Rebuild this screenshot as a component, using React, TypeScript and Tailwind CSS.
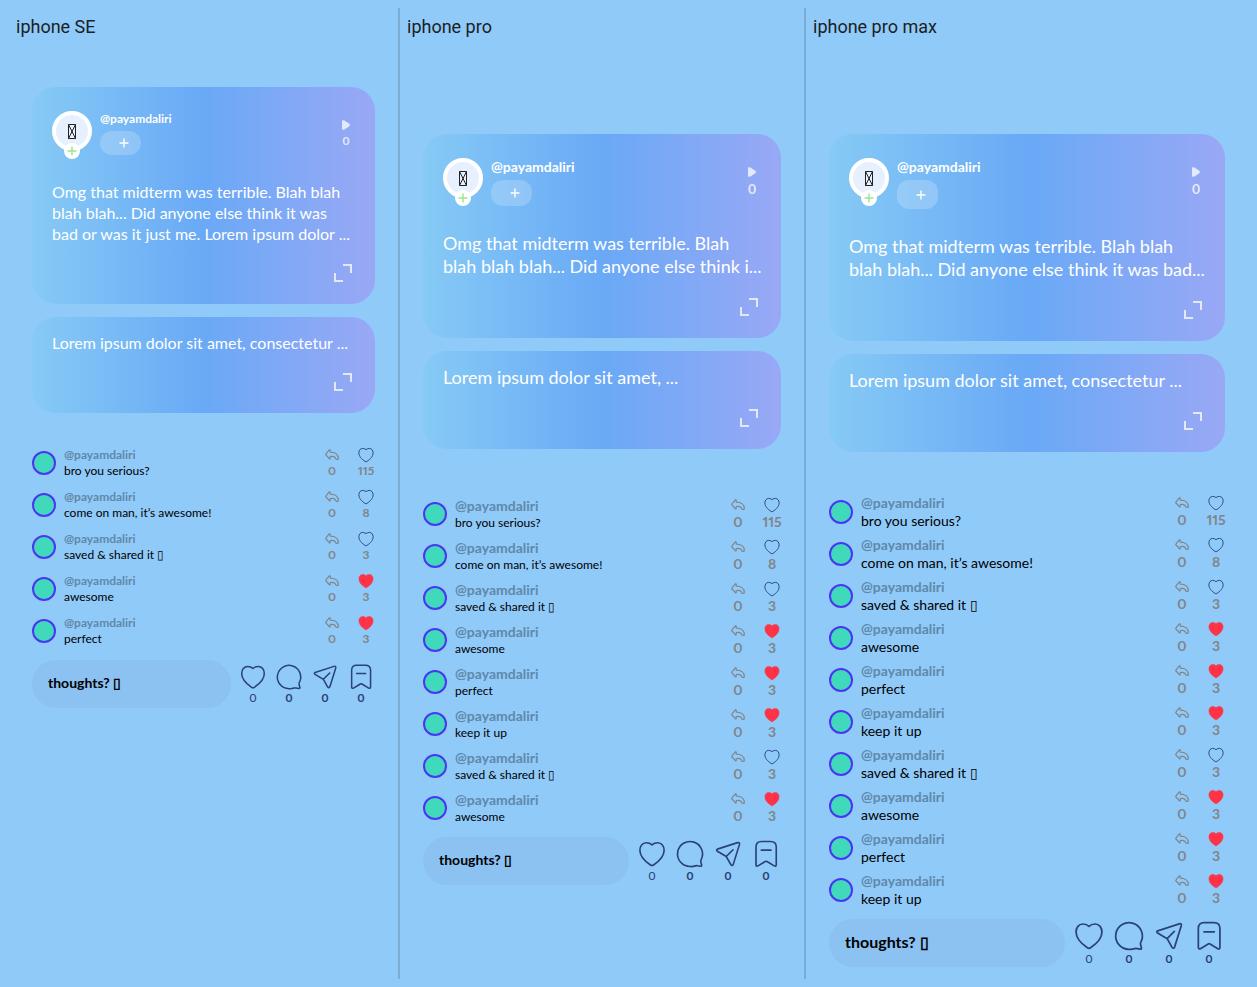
import React from "react";

type IconProps = { className?: string };

const HEART =
  "M12 4.7C10.8 3.5 8.9 3 7.4 3 4.3 3 2.3 5.8 2.3 9c0 5 4 8.800 8.500 11.800q1.200.8 2.400 0C17.700 17.800 21.700 14 21.700 9c0-3.200-2-6-5.100-6-1.500 0-3.400.5-4.600 1.700Z";

function Heart({ className, filled = false }: IconProps & { filled?: boolean }) {
  return (
    <svg viewBox="0 0 24 24" className={className} fill={filled ? "currentColor" : "none"} stroke="currentColor" strokeWidth={filled ? 0.6 : 1.3} strokeLinejoin="round" aria-hidden="true">
      <path d={HEART} />
    </svg>
  );
}

function Bubble({ className }: IconProps) {
  return (
    <svg viewBox="0 0 24 24" className={className} fill="none" stroke="currentColor" strokeWidth="1.3" strokeLinejoin="round" aria-hidden="true">
      <path d="M12 22a10 10 0 1 1 8.900-5.400c-.4.8-.4 1.300-.2 2l.6 2.200c.2.7-.2 1.100-.9 1l-2.300-.4c-.7-.1-1.200-.1-1.800.1A10 10 0 0 1 12 22Z" />
    </svg>
  );
}

function Send({ className }: IconProps) {
  return (
    <svg viewBox="0 0 24 24" className={className} fill="none" stroke="currentColor" strokeWidth="1.3" strokeLinecap="round" strokeLinejoin="round" aria-hidden="true">
      <path d="M3.500 8.100 19.700 2.900Q21.600 2.400 21.200 4.300L16.200 20.300Q15.400 22 14.200 20.400L10.600 14 3.500 9.800Q2.200 8.800 3.500 8.100ZM10.600 14 16 8.600" />
    </svg>
  );
}

function Bookmark({ className }: IconProps) {
  return (
    <svg viewBox="0 0 24 24" className={className} fill="none" stroke="currentColor" strokeWidth="1.3" strokeLinecap="round" strokeLinejoin="round" aria-hidden="true">
      <path d="M8.300 2h7.400q4.500 0 4.500 4.300v14.200q0 1.700-1.600 1L12.800 18q-.7-.4-1.400 0l-5.800 3.500q-1.600.7-1.600-1V6.300Q4 2 8.300 2ZM8.200 8.900h7.800" />
    </svg>
  );
}

function Reply({ className }: IconProps) {
  return (
    <svg viewBox="0 0 14 12" className={className} fill="none" stroke="currentColor" strokeWidth="1.200" strokeLinejoin="round" aria-hidden="true">
      <path d="M5.200 1.300V3.100C9.700 2.900 13.300 5.300 13.300 9.400q0 .9-1 .9h-.8q-.8 0-1-.9C10.100 7.600 8 7 5.200 7.500V9.200q0 1.100-.9.500L1 6q-.6-.6 0-1.200L4.300.9q.9-.6.9.4Z" />
    </svg>
  );
}

function Expand({ className }: IconProps) {
  return (
    <svg viewBox="0 0 24 24" className={className} fill="none" stroke="currentColor" strokeWidth="2" aria-hidden="true">
      <path d="M12 4h8v8M4 12v8h8" />
    </svg>
  );
}

function Play({ className }: IconProps) {
  return (
    <svg viewBox="0 0 8 10" className={className} fill="currentColor" aria-hidden="true">
      <path d="M0 1Q0 0 1.200.3L2.500.5 7.300 3.800Q8.600 5 7.300 6.200L2.500 9.500 1.200 9.700Q0 10 0 9Z" />
    </svg>
  );
}

function Plus({ className }: IconProps) {
  return (
    <svg viewBox="0 0 10 10" className={className} fill="none" stroke="currentColor" strokeWidth="1.400" strokeLinecap="round" aria-hidden="true">
      <path d="M5 1v8M1 5h8" />
    </svg>
  );
}

function MissingGlyph({ className }: IconProps) {
  return (
    <svg viewBox="0 0 8 15" className={className} fill="none" stroke="currentColor" strokeWidth="1" aria-hidden="true">
      <path d="M.5.5h7v14h-7ZM.5.5l7 14M7.500.5l-7 14" />
    </svg>
  );
}

type Comment = { text: string; likes: number; liked: boolean };

const comments: Comment[] = [
  { text: "bro you serious?", likes: 115, liked: false },
  { text: "come on man, it’s awesome!", likes: 8, liked: false },
  { text: "saved & shared it ▯", likes: 3, liked: false },
  { text: "awesome", likes: 3, liked: true },
  { text: "perfect", likes: 3, liked: true },
  { text: "keep it up", likes: 3, liked: true },
  { text: "saved & shared it ▯", likes: 3, liked: false },
  { text: "awesome", likes: 3, liked: true },
  { text: "perfect", likes: 3, liked: true },
  { text: "keep it up", likes: 3, liked: true },
];

type Device = {
  id: string;
  title: string;
  post: string[];
  quote: string;
  count: number;
  top: string;
  listGap: string;
  handle: string;
  pill: string;
  body: string;
  comment: string;
  input: string;
  action: string;
};

const devices: Device[] = [
  {
    id: "se",
    title: "iphone SE",
    post: ["Omg that midterm was terrible. Blah blah", "blah blah... Did anyone else think it was", "bad or was it just me. Lorem ipsum dolor ..."],
    quote: "Lorem ipsum dolor sit amet, consectetur ...",
    count: 5,
    top: "pt-12",
    listGap: "mt-[29px]",
    handle: "text-[12px] leading-[16px]",
    pill: "h-[24px]",
    body: "text-[16px] leading-[21px]",
    comment: "text-[12px] leading-[16px]",
    input: "text-[14px]",
    action: "size-[28px]",
  },
  {
    id: "pro",
    title: "iphone pro",
    post: ["Omg that midterm was terrible. Blah", "blah blah blah... Did anyone else think i..."],
    quote: "Lorem ipsum dolor sit amet, ...",
    count: 8,
    top: "pt-[95px]",
    listGap: "mt-[44px]",
    handle: "text-[14px] leading-[18px]",
    pill: "h-[26px]",
    body: "text-[18px] leading-[23px]",
    comment: "text-[12px] leading-[16px]",
    input: "text-[14px]",
    action: "size-[30px]",
  },
  {
    id: "max",
    title: "iphone pro max",
    post: ["Omg that midterm was terrible. Blah blah", "blah blah... Did anyone else think it was bad..."],
    quote: "Lorem ipsum dolor sit amet, consectetur ...",
    count: 10,
    top: "pt-[95px]",
    listGap: "mt-[39px]",
    handle: "text-[14px] leading-[18px]",
    pill: "h-[29px]",
    body: "text-[18px] leading-[23px]",
    comment: "text-[14px] leading-[18px]",
    input: "text-[16px]",
    action: "size-[32px]",
  },
];

const cardClass = "flex flex-col rounded-3xl bg-linear-to-r/srgb from-[#86caf5] via-[#69a9f6] to-[#99a8f5] px-5 pb-[19px] text-white";

function ExpandButton() {
  return (
    <button type="button" aria-label="Expand" className="mt-[17px] self-end text-white/75">
      <Expand className="size-6" />
    </button>
  );
}

function Post({ device }: { device: Device }) {
  return (
    <article className={`${cardClass} pt-6`}>
      <header className="flex gap-2">
        <div className="relative size-10 shrink-0">
          <div className="grid size-10 place-items-center rounded-full border-4 border-white bg-[#e6f0ff] text-[#222]">
            <MissingGlyph className="h-[15px] w-[8px]" />
          </div>
          <span className="absolute top-8 left-3 grid size-4 place-items-center rounded-full bg-white text-[#9be58a]">
            <Plus className="size-[10px]" />
          </span>
        </div>
        <div className="flex flex-col items-start gap-1">
          <a href="#profile" className={`font-bold ${device.handle}`}>@payamdaliri</a>
          <button type="button" aria-label="Follow" className={`flex w-[41px] items-center justify-end rounded-xl bg-white/20 pr-3 ${device.pill}`}>
            <Plus className="size-[10px]" />
          </button>
        </div>
        <button type="button" aria-label="Plays" className={`mt-[9px] ml-auto mr-[5px] flex flex-col items-center gap-[3px] self-start font-bold text-white/75 ${device.handle}`}>
          <Play className="h-[10px] w-[8px]" />
          <span>0</span>
        </button>
      </header>
      <p className={`mt-[26px] whitespace-nowrap ${device.body}`}>
        {device.post.map((line) => (
          <span key={line} className="block">{line}</span>
        ))}
      </p>
      <ExpandButton />
    </article>
  );
}

function CommentRow({ comment, device }: { comment: Comment; device: Device }) {
  return (
    <li className="flex h-[42px] items-center gap-2">
      <span className="size-6 shrink-0 rounded-full border-2 border-[#4a35f5] bg-[#41d9bb]" />
      <div className="min-w-0 flex-1 pb-px">
        <p className={`font-bold text-[#5f88a9] ${device.handle}`}>@payamdaliri</p>
        <p className={`text-black ${device.comment}`}>{comment.text}</p>
      </div>
      <div className={`flex gap-4 font-bold text-[#808588] proportional-nums ${device.handle}`}>
        <button type="button" aria-label="Reply" className="flex w-[18px] flex-col items-center">
          <span className="flex h-4 items-center">
            <Reply className="h-[12px] w-[14px]" />
          </span>
          <span>0</span>
        </button>
        <button type="button" aria-label="Like comment" className="flex w-[18px] flex-col items-center">
          <Heart className={`h-4 w-[18px] scale-110 ${comment.liked ? "text-[#ff3347]" : "text-[#2b4580]"}`} filled={comment.liked} />
          <span>{comment.likes}</span>
        </button>
      </div>
    </li>
  );
}

const actions = [
  { label: "Like", weight: "font-normal", icon: Heart },
  { label: "Comments", weight: "font-bold", icon: Bubble },
  { label: "Share", weight: "font-bold", icon: Send },
  { label: "Save", weight: "font-bold", icon: Bookmark },
];

function Screen({ device }: { device: Device }) {
  return (
    <section className="min-w-0 border-x border-black/15 px-[7px] pt-[7px] pb-3 first:border-l-transparent last:border-r-transparent">
      <h2 className="font-[Roboto,sans-serif] text-[18px] leading-6 text-[#1b1f24]">{device.title}</h2>
      <div className={`px-4 ${device.top}`}>
        <div className="flex flex-col gap-[13px]">
          <Post device={device} />
          <article className={`${cardClass} pt-[15px]`}>
            <p className={`whitespace-nowrap ${device.body}`}>{device.quote}</p>
            <ExpandButton />
          </article>
        </div>
        <ul className={device.listGap}>
          {comments.slice(0, device.count).map((comment, index) => (
            <CommentRow key={index} comment={comment} device={device} />
          ))}
        </ul>
        <form className="mt-2 flex items-center gap-2" onSubmit={(event) => event.preventDefault()}>
          <input
            type="text"
            aria-label="Your thoughts"
            placeholder="thoughts? ▯"
            className={`h-12 min-w-0 flex-1 rounded-full bg-[#8bc2f2] px-4 pb-[3px] font-bold text-black outline-none placeholder:text-black ${device.input}`}
          />
          {actions.map(({ label, weight, icon: Icon }) => (
            <button key={label} type="button" aria-label={label} className={`flex flex-col items-center pb-px text-[12px] leading-[14px] text-[#2b4274] ${weight}`}>
              <Icon className={device.action} />
              <span>0</span>
            </button>
          ))}
        </form>
      </div>
    </section>
  );
}

export default function App() {
  return (
    <main className="grid min-h-screen grid-cols-[391fr_406fr_444fr] bg-[#90caf9] p-2 font-[Lato,sans-serif]">
      {devices.map((device) => (
        <Screen key={device.id} device={device} />
      ))}
    </main>
  );
}
